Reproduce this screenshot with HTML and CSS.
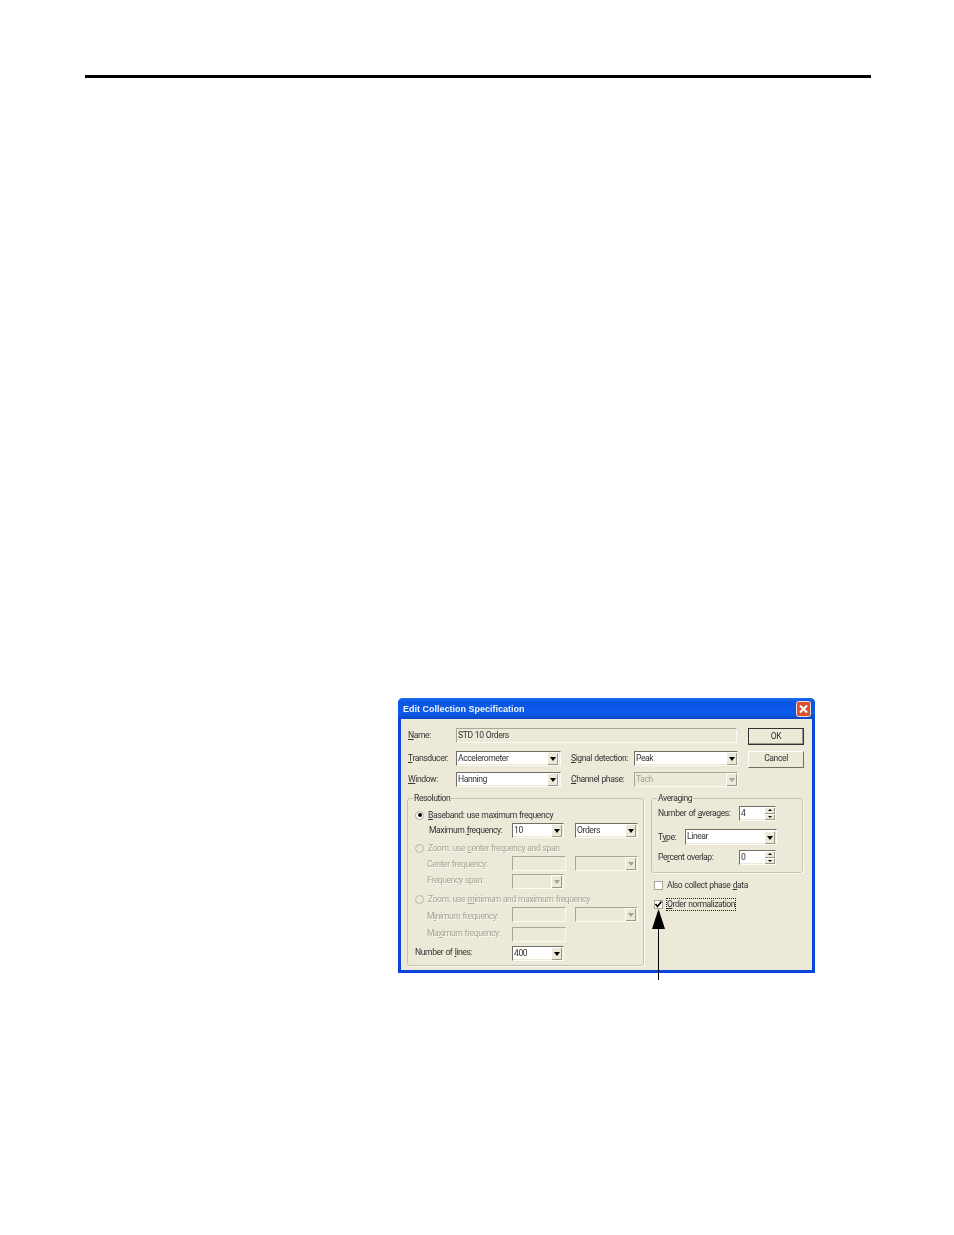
FILE: index.html
```html
<!DOCTYPE html>
<html lang="en">
<head>
    <meta charset="UTF-8">
    <title>Edit Collection Specification</title>
    <link rel="stylesheet" href="styles.css">
</head>
<body>
    <div class="page-rule"></div>

    <div class="figure">
        <div class="dialog">
            <div class="titlebar">
                <span class="title">Edit Collection Specification</span>
                <svg class="close" viewBox="0 0 15 16" width="15" height="16">
                    <rect x="0.5" y="0.5" width="14" height="15" rx="2" fill="#d9532f" stroke="#f0ded6"/>
                    <path d="M4 4.5l7 7M11 4.5l-7 7" stroke="#fff" stroke-width="2" fill="none"/>
                </svg>
            </div>

            <div class="dialog-body">
                <div class="top">
                    <div class="fields">
                        <div class="field-row">
                            <label class="label-main label-name"><u>N</u>ame:</label>
                            <div class="input readonly name-input"><span>STD 10 Orders</span></div>
                        </div>
                        <div class="field-row row-transducer">
                            <label class="label-main"><u>T</u>ransducer:</label>
                            <div class="combo combo-main"><span>Accelerometer</span><i class="drop"></i></div>
                            <label class="label-side"><u>S</u>ignal detection:</label>
                            <div class="combo combo-side"><span>Peak</span><i class="drop"></i></div>
                        </div>
                        <div class="field-row row-window">
                            <label class="label-main"><u>W</u>indow:</label>
                            <div class="combo combo-main"><span>Hanning</span><i class="drop"></i></div>
                            <label class="label-side"><u>C</u>hannel phase:</label>
                            <div class="combo combo-side disabled"><span>Tach</span><i class="drop"></i></div>
                        </div>
                    </div>
                    <div class="buttons">
                        <button class="btn btn-default">OK</button>
                        <button class="btn">Cancel</button>
                    </div>
                </div>

                <div class="groups">
                    <fieldset class="group group-resolution">
                        <legend>Resolution</legend>
                        <div class="res-row r-baseband">
                            <i class="radio on"></i><span class="radio-text"><u>B</u>aseband: use maximum frequency</span>
                        </div>
                        <div class="res-row r-max">
                            <label class="res-label indent-a">Maximum <u>f</u>requency:</label>
                            <div class="combo combo-num"><span>10</span><i class="drop"></i></div>
                            <div class="combo combo-unit"><span>Orders</span><i class="drop"></i></div>
                        </div>
                        <div class="res-row r-zoom1 off">
                            <i class="radio"></i><span class="radio-text">Zoom: use <u>c</u>enter frequency and span</span>
                        </div>
                        <div class="res-row r-center off">
                            <label class="res-label indent-b">Center frequency:</label>
                            <div class="input blank"></div>
                            <div class="combo combo-unit disabled"><span></span><i class="drop"></i></div>
                        </div>
                        <div class="res-row r-span off">
                            <label class="res-label indent-b">Frequency span:</label>
                            <div class="combo combo-num disabled"><span></span><i class="drop"></i></div>
                        </div>
                        <div class="res-row r-zoom2 off">
                            <i class="radio"></i><span class="radio-text">Zoom: use <u>m</u>inimum and maximum frequency</span>
                        </div>
                        <div class="res-row r-min off">
                            <label class="res-label indent-b">M<u>i</u>nimum frequency:</label>
                            <div class="input blank"></div>
                            <div class="combo combo-unit disabled"><span></span><i class="drop"></i></div>
                        </div>
                        <div class="res-row r-maxf off">
                            <label class="res-label indent-b">Ma<u>x</u>imum frequency:</label>
                            <div class="input blank"></div>
                        </div>
                        <div class="res-row r-lines">
                            <label class="res-label">Number of <u>l</u>ines:</label>
                            <div class="combo combo-num"><span>400</span><i class="drop"></i></div>
                        </div>
                    </fieldset>

                    <div class="side">
                        <fieldset class="group group-averaging">
                            <legend>Averaging</legend>
                            <div class="avg-row r-averages">
                                <label class="avg-label">Number of <u>a</u>verages:</label>
                                <div class="spin"><span>4</span><i class="spin-btns"><b class="up"></b><b class="down"></b></i></div>
                            </div>
                            <div class="avg-row r-type">
                                <label class="avg-label type-label">T<u>y</u>pe:</label>
                                <div class="combo combo-type"><span>Linear</span><i class="drop"></i></div>
                            </div>
                            <div class="avg-row r-overlap">
                                <label class="avg-label">Pe<u>r</u>cent overlap:</label>
                                <div class="spin"><span>0</span><i class="spin-btns"><b class="up"></b><b class="down"></b></i></div>
                            </div>
                        </fieldset>
                        <div class="check-row check-phase">
                            <i class="check"></i><span>Also collect phase <u>d</u>ata</span>
                        </div>
                        <div class="check-row check-order">
                            <i class="check">
                                <svg viewBox="0 0 9 9" width="9" height="9"><path d="M1.5 4l2 2.5 4-5" stroke="#000" stroke-width="1.6" fill="none"/></svg>
                            </i><span class="focus"><u>O</u>rder normalization</span>
                        </div>
                    </div>
                </div>
            </div>
        </div>

        <div class="callout">
            <svg class="callout-head" viewBox="0 0 13 20" width="13" height="20">
                <path d="M6.5 0L13 20H0z" fill="#000"/>
            </svg>
            <div class="callout-stem"></div>
        </div>
    </div>
</body>
</html>
```

FILE: styles.css
```css
html,
body {
    min-height: 100vh;
}
body {
    margin: 0;
    background: #fff;
    font-family: Roboto, "Liberation Sans", Arial, sans-serif;
    font-size: 8.6px;
    letter-spacing: -0.42px;
    word-spacing: 0.5px;
    line-height: 11px;
    white-space: nowrap;
    color: #333;
}
.page-rule {
    height: 3px;
    width: 786px;
    margin: 75px 0 0 85px;
    background: #000;
}
.figure {
    position: relative;
    width: 417px;
    height: 282px;
    margin: 620px 0 0 398px;
}

/* dialog frame */
.dialog {
    box-sizing: border-box;
    width: 417px;
    height: 275px;
    background: #ece9d8;
    border: 3px solid #0a46dc;
    border-top: 0;
    border-radius: 5px 5px 0 0;
}
.titlebar {
    display: flex;
    align-items: center;
    justify-content: space-between;
    height: 21px;
    margin: 0 -3px;
    padding: 1px 4px 0 5px;
    box-sizing: border-box;
    border-radius: 5px 5px 0 0;
    background: linear-gradient(#1a6cf0, #0a55e4 20%, #0b5bea 70%, #0a48c8);
}
.title {
    color: #f0f2f8;
    font-family: "Liberation Sans", Arial, sans-serif;
    font-weight: bold;
    font-size: 9px;
    letter-spacing: 0;
    word-spacing: 0;
    filter: blur(0.3px);
}
.close {
    display: block;
}
.dialog-body {
    padding: 9px 0 0 6px;
    filter: blur(0.35px);
}

/* top fields */
.top {
    display: flex;
}
.fields {
    width: 331px;
    margin-left: 1px;
}
.field-row {
    display: flex;
    align-items: center;
}
.row-transducer {
    margin-top: 8px;
}
.row-window {
    margin-top: 6px;
}
.label-main {
    width: 48px;
    margin-bottom: 1px;
}
.label-name {
    margin-bottom: 0;
}
.label-side {
    width: 63px;
    margin: 0 0 1px 10px;
}
.buttons {
    display: flex;
    flex-direction: column;
    gap: 6px;
    margin-left: 9px;
}
.btn {
    box-sizing: border-box;
    width: 56px;
    height: 17px;
    padding: 0 0 2px;
    font: inherit;
    letter-spacing: inherit;
    color: inherit;
    background: #ece9d8;
    border: 1px solid;
    border-color: #fff #716f64 #716f64 #fff;
}
.btn-default {
    padding: 0;
    border: 1px solid #333;
    box-shadow: inset -1px -1px 0 #9a988a;
}

/* inputs */
.input,
.combo,
.spin {
    box-sizing: border-box;
    height: 15px;
    display: flex;
    align-items: center;
    background: #fff;
    border: 1px solid;
    border-color: #716f64 #fbfaf5 #fbfaf5 #716f64;
    box-shadow: inset -1px -1px 0 #ece9d8;
    padding-left: 1px;
}
.input span,
.combo span,
.spin span {
    margin-bottom: 1px;
}
.input.readonly,
.input.blank,
.combo.disabled {
    background: #ece9d8;
    border-color: #a8a696 #fbfaf5 #fbfaf5 #a8a696;
}
.name-input {
    width: 281px;
}
.input.blank {
    width: 54px;
}
.combo span {
    flex: 1;
}
.combo.disabled span {
    color: #a5a394;
}
.drop {
    position: relative;
    width: 11px;
    height: 13px;
    margin-right: 1px;
    background: #ece9d8;
    box-shadow: inset 1px 1px 0 #fff, inset -1px -1px 0 #9a988a;
}
.drop::after {
    content: "";
    position: absolute;
    left: 2.5px;
    top: 5px;
    border: 3px solid transparent;
    border-top: 4px solid #000;
    border-bottom: 0;
}
.disabled .drop::after {
    border-top-color: #a5a394;
}
.combo-main {
    width: 105px;
}
.combo-main .drop {
    margin-right: 2px;
}
.combo-side {
    width: 104px;
}
.combo-side .drop {
    margin-right: 0;
}
.combo-num {
    width: 52px;
}
.combo-unit {
    width: 63px;
    margin-left: auto;
}
.combo-type {
    width: 92px;
    height: 16px;
}

/* group boxes */
.groups {
    display: flex;
    gap: 7px;
    margin-top: 5px;
}
.group {
    box-sizing: border-box;
    margin: 0;
    padding: 0;
    min-width: 0;
    border: 1px solid #c4c2b1;
    border-radius: 3px;
    box-shadow: 1px 1px 0 #fbfaf5;
}
.group legend {
    height: 12px;
    line-height: 12px;
    margin-left: 5px;
    padding: 0 1px;
}
.group-resolution {
    width: 237px;
    height: 174px;
}
.side {
    width: 152px;
}
.group-averaging {
    height: 81px;
}

/* resolution rows */
.res-row {
    display: flex;
    align-items: center;
    width: 223px;
    margin-left: 7px;
}
.r-baseband { height: 12px; margin-top: 5px; }
.r-max { margin-top: 2px; }
.r-zoom1 { height: 12px; margin-top: 4px; }
.r-center { margin-top: 2px; }
.r-span { margin-top: 3px; }
.r-zoom2 { height: 12px; margin-top: 4px; }
.r-min { margin-top: 2px; }
.r-maxf { margin-top: 5px; }
.r-lines { margin-top: 4px; }
.res-label {
    box-sizing: border-box;
    width: 97px;
}
.r-zoom1 .radio-text { margin-top: 1px; }
.r-max .res-label { margin-bottom: 1px; }
.r-center .res-label { margin-top: 1px; }
.r-span .res-label { margin-bottom: 3px; }
.r-min .res-label { margin-top: 3px; }
.r-maxf .res-label { margin-bottom: 3px; }
.r-lines .res-label { margin-bottom: 3px; }
.indent-a {
    padding-left: 14px;
}
.indent-b {
    padding-left: 12px;
}
.off .res-label,
.off .radio-text {
    color: #a5a394;
    text-shadow: 0.5px 0.5px 0 #fbfaf5;
}
.radio {
    position: relative;
    box-sizing: border-box;
    width: 9px;
    height: 9px;
    margin-right: 4px;
    border-radius: 50%;
    background: #fff;
    border: 1px solid #a8a696;
}
.off .radio {
    background: #ece9d8;
    border-color: #b8b6a6;
}
.radio.on::after {
    content: "";
    position: absolute;
    left: 1.5px;
    top: 1.5px;
    width: 4px;
    height: 4px;
    border-radius: 50%;
    background: #000;
}

/* averaging rows */
.avg-row {
    display: flex;
    align-items: center;
    margin-left: 6px;
}
.r-averages { margin-top: 2px; }
.r-type { margin-top: 8px; }
.r-overlap { margin-top: 5px; }
.avg-label {
    width: 81px;
}
.avg-label.type-label {
    width: 27px;
}
.spin {
    width: 37px;
}
.spin span {
    flex: 1;
}
.spin-btns {
    display: flex;
    flex-direction: column;
    width: 11px;
    height: 13px;
}
.spin-btns b {
    flex: 1;
    position: relative;
    background: #ece9d8;
    box-shadow: inset 1px 1px 0 #fff, inset -1px -1px 0 #9a988a;
}
.spin-btns b::after {
    content: "";
    position: absolute;
    left: 3.5px;
    top: 2px;
    border: 2px solid transparent;
}
.spin-btns .up::after {
    border-bottom: 2px solid #000;
    border-top: 0;
}
.spin-btns .down::after {
    border-top: 2px solid #000;
    border-bottom: 0;
}

/* check boxes */
.check-row {
    display: flex;
    align-items: center;
    height: 12px;
    margin-left: 3px;
}
.check-phase {
    margin-top: 6px;
}
.check-order {
    margin-top: 7px;
}
.check {
    box-sizing: border-box;
    display: block;
    width: 9px;
    height: 9px;
    margin-right: 4px;
    background: #fff;
    border: 1px solid #a8a696;
}
.check svg {
    display: block;
    margin: -1px;
}
.focus {
    outline: 1px dotted #222;
    line-height: 11px;
}

/* arrow drawn over the dialog */
.callout {
    position: absolute;
    left: 254px;
    top: 211px;
    display: flex;
    flex-direction: column;
    align-items: center;
    width: 13px;
}
.callout-head {
    display: block;
}
.callout-stem {
    width: 1px;
    height: 51px;
    background: #000;
}
```
